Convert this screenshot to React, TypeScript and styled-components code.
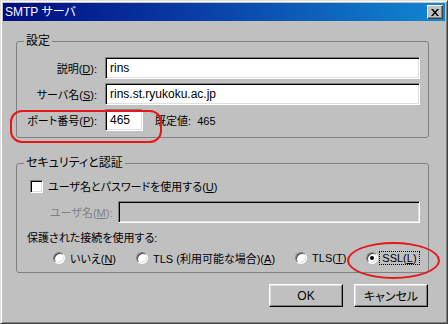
import React from "react";
import styled, { createGlobalStyle } from "styled-components";

const GlobalStyle = createGlobalStyle`
  html, body {
    margin: 0;
    padding: 0;
    background: #c0c0c0;
  }
  body {
    font-family: "Liberation Sans", "Noto Sans CJK JP", sans-serif;
    font-size: 11px;
    color: #000;
    font-feature-settings: "palt";
  }
`;

const StyledWindow = styled.div`
  position: relative;
  width: 448px;
  height: 324px;
  box-sizing: border-box;
  background: #c0c0c0;
  border: 1px solid;
  border-color: #dfdfdf #404040 #404040 #dfdfdf;
  box-shadow: inset 1px 1px #fff, inset -1px -1px #808080;
  padding: 2px;
  display: flex;
  flex-direction: column;
`;

const StyledTitleBar = styled.div`
  height: 18px;
  display: flex;
  align-items: center;
  justify-content: space-between;
  padding: 0 2px;
  background: linear-gradient(to right, #000c80, #0a3fa8 45%, #1088d2);
  color: #fff;
  font-size: 12px;
  line-height: 14px;
`;

const StyledCloseButton = styled.div`
  width: 16px;
  height: 14px;
  box-sizing: border-box;
  background: #c0c0c0;
  border: 1px solid;
  border-color: #fff #404040 #404040 #fff;
  box-shadow: inset -1px -1px #808080;
  display: flex;
  align-items: center;
  justify-content: center;
`;

const StyledBody = styled.div`
  display: flex;
  flex-direction: column;
  padding: 13px 16px 0 13px;
`;

const StyledGroup = styled.fieldset<{ $top?: number }>`
  margin: ${(p) => p.$top ?? 0}px 0 0 0;
  padding: 0;
  border: 1px solid #808080;
  border-radius: 3px;
  min-width: 0;
`;

const StyledLegend = styled.legend`
  margin-left: 7px;
  padding: 0 2px;
  font-size: 12px;
  line-height: 14px;
`;

const StyledFormGrid = styled.div`
  display: grid;
  grid-template-columns: 72px 1fr;
  column-gap: 8px;
  row-gap: 4px;
  padding: 9px 8px 6px 8px;
`;

const StyledLabel = styled.label<{ $disabled?: boolean }>`
  align-self: center;
  text-align: right;
  white-space: nowrap;
  color: ${(p) => (p.$disabled ? "#808080" : "#000")};
`;

const StyledInput = styled.div<{ $width?: number; $disabled?: boolean }>`
  height: 22px;
  box-sizing: border-box;
  width: ${(p) => (p.$width ? `${p.$width}px` : "auto")};
  flex: ${(p) => (p.$width ? "none" : "1")};
  background: ${(p) => (p.$disabled ? "#c0c0c0" : "#fff")};
  border: 1px solid;
  border-color: #808080 #fff #fff #808080;
  box-shadow: inset 1px 1px #000, inset -1px -1px #dfdfdf;
  display: flex;
  align-items: center;
  padding: 0 4px;
  font-size: 12px;
  white-space: nowrap;
`;

const StyledPortCell = styled.div`
  display: flex;
  align-items: center;
`;

const StyledDefault = styled.span`
  margin-left: 12px;
`;

const StyledSecurity = styled.div`
  display: flex;
  flex-direction: column;
  padding: 8px 8px 6px 13px;
`;

const StyledCheckRow = styled.label`
  display: flex;
  align-items: center;
  gap: 5px;
  height: 16px;
`;

const StyledCheckbox = styled.span`
  width: 13px;
  height: 13px;
  box-sizing: border-box;
  background: #fff;
  border: 1px solid;
  border-color: #808080 #fff #fff #808080;
  box-shadow: inset 1px 1px #000, inset -1px -1px #dfdfdf;
`;

const StyledUserRow = styled.div`
  display: flex;
  align-items: center;
  gap: 6px;
  margin-top: 7px;
  padding-left: 20px;
`;

const StyledCaption = styled.div`
  margin: 8px 0 0 -3px;
  line-height: 14px;
`;

const StyledRadioRow = styled.div`
  display: flex;
  align-items: center;
  gap: 20px;
  height: 16px;
  margin-top: 5px;
  padding-left: 23px;
`;

const StyledRadioItem = styled.label`
  display: flex;
  align-items: center;
  gap: 5px;
  white-space: nowrap;
`;

const StyledRadio = styled.span<{ $checked?: boolean }>`
  position: relative;
  width: 12px;
  height: 12px;
  box-sizing: border-box;
  border-radius: 50%;
  background: #fff;
  border: 1px solid;
  border-color: #808080 #fff #fff #808080;
  box-shadow: inset 1px 1px #404040, inset -1px -1px #dfdfdf;

  &::after {
    content: "";
    display: ${(p) => (p.$checked ? "block" : "none")};
    position: absolute;
    left: 3px;
    top: 3px;
    width: 4px;
    height: 4px;
    border-radius: 50%;
    background: #000;
  }
`;

const StyledFocus = styled.span`
  outline: 1px dotted #000;
  outline-offset: 0;
  padding: 0 2px;
  margin-left: -3px;
`;

const StyledButtons = styled.div`
  display: flex;
  justify-content: flex-end;
  gap: 11px;
  margin: 11px 1px 0 0;
`;

const StyledButton = styled.div`
  width: 74px;
  height: 23px;
  box-sizing: border-box;
  background: #c0c0c0;
  border: 1px solid;
  border-color: #fff #000 #000 #fff;
  box-shadow: inset -1px -1px #808080, inset 1px 1px #dfdfdf;
  display: flex;
  align-items: center;
  justify-content: center;
  font-size: 12px;
`;

const StyledMark = styled.div<{ $round?: boolean }>`
  position: absolute;
  border: 2px solid #e41818;
  border-radius: ${(p) => (p.$round ? "50%" : "12px")};
  pointer-events: none;
`;

const CloseIcon = () => (
  <svg width="8" height="7" viewBox="0 0 8 7">
    <path d="M0 0h2l2 2.5L6 0h2L5 3.5 8 7H6L4 4.5 2 7H0l3-3.5z" fill="#000" />
  </svg>
);

const App = () => {
  return (
    <StyledWindow>
      <GlobalStyle />
      <StyledTitleBar>
        <span>SMTP サーバ</span>
        <StyledCloseButton>
          <CloseIcon />
        </StyledCloseButton>
      </StyledTitleBar>
      <StyledBody>
        <StyledGroup>
          <StyledLegend>設定</StyledLegend>
          <StyledFormGrid>
            <StyledLabel>
              説明(<u>D</u>):
            </StyledLabel>
            <StyledInput>rins</StyledInput>
            <StyledLabel>
              サーバ名(<u>S</u>):
            </StyledLabel>
            <StyledInput>rins.st.ryukoku.ac.jp</StyledInput>
            <StyledLabel>
              ポート番号(<u>P</u>):
            </StyledLabel>
            <StyledPortCell>
              <StyledInput $width={38}>465</StyledInput>
              <StyledDefault>既定値:&nbsp;&nbsp;465</StyledDefault>
            </StyledPortCell>
          </StyledFormGrid>
        </StyledGroup>
        <StyledGroup $top={18}>
          <StyledLegend>セキュリティと認証</StyledLegend>
          <StyledSecurity>
            <StyledCheckRow>
              <StyledCheckbox />
              <span>
                ユーザ名とパスワードを使用する(<u>U</u>)
              </span>
            </StyledCheckRow>
            <StyledUserRow>
              <StyledLabel $disabled>
                ユーザ名(<u>M</u>):
              </StyledLabel>
              <StyledInput $disabled />
            </StyledUserRow>
            <StyledCaption>保護された接続を使用する:</StyledCaption>
            <StyledRadioRow>
              <StyledRadioItem>
                <StyledRadio />
                <span>
                  いいえ(<u>N</u>)
                </span>
              </StyledRadioItem>
              <StyledRadioItem>
                <StyledRadio />
                <span>
                  TLS (利用可能な場合)(<u>A</u>)
                </span>
              </StyledRadioItem>
              <StyledRadioItem>
                <StyledRadio />
                <span>
                  TLS(<u>T</u>)
                </span>
              </StyledRadioItem>
              <StyledRadioItem>
                <StyledRadio $checked />
                <StyledFocus>
                  SSL(<u>L</u>)
                </StyledFocus>
              </StyledRadioItem>
            </StyledRadioRow>
          </StyledSecurity>
        </StyledGroup>
        <StyledButtons>
          <StyledButton>OK</StyledButton>
          <StyledButton>キャンセル</StyledButton>
        </StyledButtons>
      </StyledBody>
      <StyledMark style={{ left: 9, top: 109, width: 148, height: 29 }} />
      <StyledMark $round style={{ left: 346, top: 241, width: 89, height: 33 }} />
    </StyledWindow>
  );
};

export default App;
